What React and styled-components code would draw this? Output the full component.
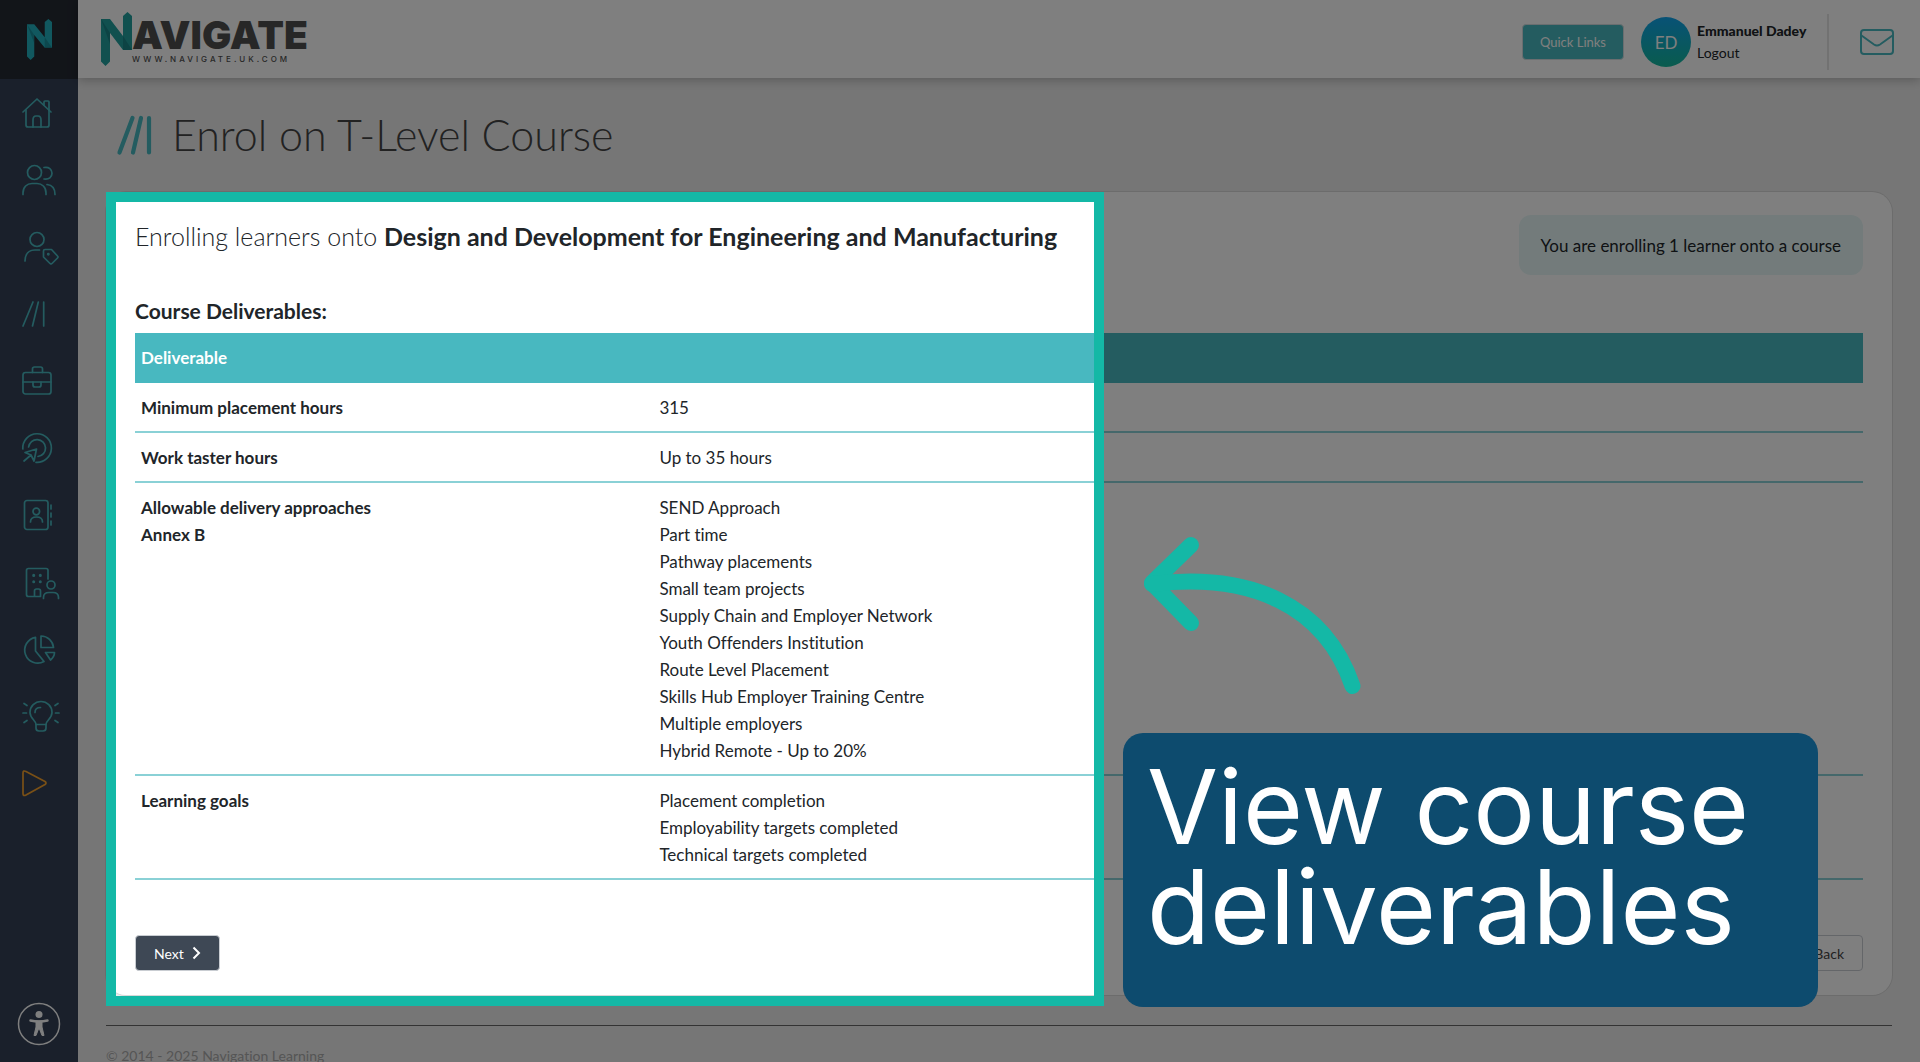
import React from 'react';
import styled, { createGlobalStyle } from 'styled-components';

const teal = '#48b8c0';
const highlight = '#14b8a6';

const GlobalStyle = createGlobalStyle`
  * {
    box-sizing: border-box;
  }

  body {
    margin: 0;
    font-family: Lato, "Open Sans", sans-serif;
    font-size: 17px;
    font-variant-ligatures: none;
    line-height: 27px;
    color: #212529;
  }
`;

const Shell = styled.div`
  display: flex;
  height: 100vh;
  overflow: hidden;
  background: #ededed;
`;

const Sidebar = styled.aside`
  display: flex;
  flex-direction: column;
  flex: 0 0 78px;
  background: #354156;
`;

const SidebarLogo = styled.a`
  display: flex;
  align-items: center;
  justify-content: center;
  height: 79px;
  background: #252a33;
`;

const NavList = styled.ul`
  flex: 1;
  margin: 0;
  padding: 0;
  list-style: none;
`;

const NavLink = styled.a`
  display: flex;
  align-items: center;
  height: 67px;
  padding-left: 20px;
  color: ${(props) => (props.$accent ? '#f5a12c' : teal)};
`;

const NavIcon = styled.svg`
  width: 40px;
  height: 40px;
  fill: none;
  stroke: currentColor;
  stroke-width: 1.7;
  stroke-linecap: round;
  stroke-linejoin: round;
`;

const AccessButton = styled.button`
  align-self: center;
  width: 44px;
  height: 44px;
  margin-bottom: 16px;
  padding: 0;
  border: none;
  background: none;
  color: #fff;
`;

const Content = styled.div`
  display: flex;
  flex: 1;
  flex-direction: column;
  min-width: 0;
`;

const Header = styled.header`
  display: flex;
  flex: none;
  align-items: center;
  justify-content: space-between;
  height: 78px;
  padding: 0 25px 0 23px;
  background: #fff;
  box-shadow: 0 2px 10px rgba(0, 0, 0, 0.25);
`;

const Brand = styled.a`
  display: flex;
  color: #4f4f4f;
  text-decoration: none;
`;

const BrandText = styled.span`
  display: flex;
  flex-direction: column;
  padding-top: 5px;
`;

const BrandName = styled.span`
  font-family: Inter, sans-serif;
  font-size: 39px;
  font-weight: 900;
  line-height: 36px;
`;

const BrandUrl = styled.span`
  font-family: Inter, sans-serif;
  font-size: 8px;
  font-weight: 500;
  line-height: 12px;
  letter-spacing: 3px;
`;

const HeaderTools = styled.div`
  display: flex;
  align-items: center;
  padding-top: 6px;
`;

const QuickLinks = styled.button`
  height: 36px;
  margin-right: 17px;
  padding: 0 17px;
  border: 1px solid #d5dde0;
  border-radius: 4px;
  background: ${teal};
  color: #fff;
  font: 400 13px Lato, sans-serif;
`;

const Avatar = styled.div`
  display: flex;
  align-items: center;
  justify-content: center;
  width: 50px;
  height: 50px;
  border-radius: 50%;
  background: linear-gradient(#10a4ec, #14b89c);
  color: #fff;
  font-size: 17px;
`;

const User = styled.div`
  display: flex;
  flex-direction: column;
  width: 136px;
  padding-left: 6px;
  font-size: 14px;
  line-height: 22px;

  a {
    color: inherit;
    text-decoration: none;
  }
`;

const UserName = styled.strong`
  font-weight: 900;
`;

const MailLink = styled.a`
  display: flex;
  align-items: center;
  height: 56px;
  padding-left: 30px;
  border-left: 2px solid #e4e4e4;
  color: ${teal};
`;

const Main = styled.main`
  flex: 1;
  padding: 0 28px;
`;

const TitleBar = styled.div`
  display: flex;
  align-items: center;
  gap: 20px;
  height: 114px;
  padding-left: 10px;
  color: ${teal};
`;

const Title = styled.h1`
  margin: 0;
  color: #444;
  font-size: 43px;
  font-weight: 300;
  line-height: 56px;
`;

const Card = styled.section`
  position: relative;
  padding: 23px 29px 24px;
  border-radius: 20px;
  background: #fff;
  box-shadow: 0 0 0 1px #d8d8d8;
`;

const CardTop = styled.div`
  display: flex;
  align-items: flex-start;
  justify-content: space-between;
`;

const CourseHeading = styled.h2`
  margin: 0;
  font-size: 25px;
  font-weight: 300;
  line-height: 42px;

  strong {
    font-weight: 700;
  }
`;

const Notice = styled.p`
  margin: 0;
  padding: 17px 22px 16px;
  border-radius: 12px;
  background: #e6f7f7;
`;

const SectionHeading = styled.h3`
  margin: 20px 0 6px;
  font-size: 21px;
  font-weight: 700;
  line-height: 32px;
`;

const Table = styled.table`
  width: 100%;
  border-collapse: separate;
  border-spacing: 0;
  text-align: left;

  th,
  td {
    padding: 11px 6px 10px;
    border-bottom: 2px solid #8ad1d6;
    vertical-align: top;
  }

  thead th {
    border-color: ${teal};
    background: ${teal};
    color: #fff;
  }

  th {
    width: 30%;
    font-weight: 700;
  }
`;

const Line = styled.div`
  white-space: nowrap;
`;

const Actions = styled.div`
  display: flex;
  justify-content: space-between;
  margin-top: 55px;
`;

const ActionButton = styled.button`
  display: flex;
  align-items: center;
  gap: 8px;
  height: 36px;
  padding: 0 18px;
  border: 1px solid #c9cdd2;
  border-radius: 4px;
  background: ${(props) => (props.$primary ? '#3e4855' : '#fff')};
  color: ${(props) => (props.$primary ? '#fff' : '#444')};
  font: 400 14px Lato, sans-serif;
`;

/* Dims the whole page except for the framed part of the card */
const Spotlight = styled.div`
  position: absolute;
  top: 0;
  bottom: -11px;
  left: 0;
  width: 998px;
  border: 10px solid ${highlight};
  box-shadow: 0 0 0 3000px rgba(0, 0, 0, 0.5);
  pointer-events: none;
`;

const CalloutArrow = styled.svg`
  position: absolute;
  top: 341px;
  left: 1034px;
  width: 230px;
  height: 170px;
  fill: none;
  stroke: ${highlight};
  stroke-width: 16;
  stroke-linecap: round;
  stroke-linejoin: round;
`;

const Callout = styled.div`
  position: absolute;
  right: 74px;
  bottom: -12px;
  width: 695px;
  height: 274px;
  padding: 24px;
  border-radius: 20px;
  background: #0d4b6e;
  color: #fff;
  font-family: Inter, sans-serif;
  font-size: 103px;
  line-height: 100px;
`;

const Footer = styled.footer`
  margin-top: 30px;
  padding-top: 16px;
  border-top: 1px solid #666;
  color: #aaa;
  font-size: 14px;
`;

const navItems = [
  {
    label: 'Home',
    icon: (
      <>
        <path d="M3 19 17 6l14 13" />
        <path d="M6 17v15q0 2 2 2h19q2 0 2-2V17" />
        <path d="M24 12V9q0-1 1-1h3q1 0 1 1v8" />
        <path d="M13 34v-7q0-4 3-4h2q3 0 3 4v7" />
      </>
    ),
  },
  {
    label: 'Users',
    icon: (
      <>
        <circle cx="14.5" cy="12.5" r="7" />
        <path d="M24 7.5c5-1 8 2 8 5.8s-3 6.5-8 5.7" />
        <path d="M3 34.500v-1.500c0-6 4-9.500 9-9.500h5c5 0 9 3.500 9 9.500v1.500" />
        <path d="M27 24.500c5 .5 8 4 8 10" />
      </>
    ),
  },
  {
    label: 'Learner tags',
    icon: (
      <>
        <circle cx="17" cy="12.5" r="7" />
        <path d="M5 34c0-7 4-11 10-11h4.500" />
        <path d="M25 22.500h6.500l6 6.500q1 1 0 2l-5.500 5.500q-1 1-2 0l-6.500-6.500V24q0-1.500 1.500-1.500z" />
        <circle cx="28.300" cy="27.300" r=".6" fill="currentColor" />
      </>
    ),
  },
  {
    label: 'Courses',
    icon: <path d="M13 8 3 32M18.300 8l-5.800 24M23.700 8v24" />,
  },
  {
    label: 'Placements',
    icon: (
      <>
        <rect x="3" y="11.5" width="28" height="21.5" rx="2.500" />
        <path d="M12.500 11.500V8q0-2 2-2h6q2 0 2 2v3.500M3 21h28" />
        <path d="M13 21v3q0 2 2 2h4q2 0 2-2v-3" />
      </>
    ),
  },
  {
    label: 'Targets',
    icon: (
      <>
        <path d="M2.800 21A14.300 14.300 0 1 1 16 34.300" />
        <path d="M8.600 19A8.500 8.500 0 1 1 18 28.500" />
        <path d="M16.500 21 5 24.500l6 2.500 3 6zM11 27l-7 6" />
      </>
    ),
  },
  {
    label: 'Contacts',
    icon: (
      <>
        <rect x="4.5" y="5.5" width="23.5" height="29" rx="2.500" />
        <circle cx="16.300" cy="16.500" r="3.300" />
        <path d="M10.500 27c0-3.500 2-5 6-5s6 1.500 6 5M31 10v4M31 18v4M31 26v4" />
      </>
    ),
  },
  {
    label: 'Employers',
    icon: (
      <>
        <path d="M28 17V8.500q0-2-2-2H8.500q-2 0-2 2v24q0 2 2 2h12V29q0-2-2-2h-2q-2 0-2 2v5.500" />
        <path d="M13.700 13.300v.1M20.300 13.300v.1M13.700 19.700v.1M20.300 19.700v.1" strokeWidth="3" />
        <circle cx="31" cy="23" r="4" />
        <path d="M23.500 36.500v-1c0-3.500 2.500-5 5.500-5h4c3 0 5.500 1.500 5.500 5v1" />
      </>
    ),
  },
  {
    label: 'Reports',
    icon: (
      <>
        <path d="M15.500 8.300V22L24 32.500A13 13 0 1 1 15.500 8.300z" />
        <path d="M21 7v11.500h12.500A12.500 12.500 0 0 0 21 7z" />
        <path d="M25.500 23.500h9q0 4-4 7.500z" />
      </>
    ),
  },
  {
    label: 'Ideas',
    icon: (
      <>
        <path d="M16 28.500c0-4-6-6-6-12a11 11 0 0 1 22 0c0 6-6 8-6 12z" />
        <path d="M16 28.500v3.500q0 3 3 3h4q3 0 3-3v-3.500" />
        <path d="M15 16.500c0-3 2-5 5.500-5" />
        <path d="M3 17h3.500M4 7.500l3 2M4 26.500l3-2M35.500 17H39M35 9.500l3-2M35 24.500l3 2" />
      </>
    ),
  },
  {
    label: 'Videos',
    accent: true,
    icon: <path d="M3 10q0-3 3-1.500l19 10q2 1.500 0 3L6 32q-3 1.500-3-1.500z" />,
  },
];

const deliverables = [
  { name: ['Minimum placement hours'], values: ['315'] },
  { name: ['Work taster hours'], values: ['Up to 35 hours'] },
  {
    name: ['Allowable delivery approaches', 'Annex B'],
    values: [
      'SEND Approach',
      'Part time',
      'Pathway placements',
      'Small team projects',
      'Supply Chain and Employer Network',
      'Youth Offenders Institution',
      'Route Level Placement',
      'Skills Hub Employer Training Centre',
      'Multiple employers',
      'Hybrid Remote - Up to 20%',
    ],
  },
  {
    name: ['Learning goals'],
    values: ['Placement completion', 'Employability targets completed', 'Technical targets completed'],
  },
];

const LogoMark = ({ width, height, color, shade }) => (
  <svg width={width} height={height} viewBox="0 0 31 54" preserveAspectRatio="none">
    <path d="M0 7h9l13 17V4l4.500-4L31 4v34h-9L9 21v28.500L4.500 54 0 49.500z" fill={color} />
    <path d="M0 7l9 14v11zM31 38h-9V24z" fill={shade} opacity="0.35" />
  </svg>
);

const App = () => {
  return (
    <>
      <GlobalStyle />
      <Shell>
        <Sidebar>
          <SidebarLogo href="#" aria-label="Navigate">
            <LogoMark width="25" height="41" color="#22b0be" shade="#0b5560" />
          </SidebarLogo>
          <NavList>
            {navItems.map((item) => (
              <li key={item.label}>
                <NavLink href="#" aria-label={item.label} $accent={item.accent}>
                  <NavIcon viewBox="0 0 40 40">{item.icon}</NavIcon>
                </NavLink>
              </li>
            ))}
          </NavList>
          <AccessButton aria-label="Accessibility">
            <svg width="44" height="44" viewBox="0 0 44 44" fill="none" stroke="currentColor">
              <circle cx="22" cy="22" r="20.500" strokeWidth="1.500" />
              <circle cx="22" cy="12.500" r="3.500" fill="currentColor" stroke="none" />
              <path d="M13.500 18.500q8.500 2 17 0" strokeWidth="2.500" strokeLinecap="round" />
              <path d="M19 19h6v6l2 8.500h-2L22.500 27h-1L19 33.500h-2L19 25z" fill="currentColor" strokeLinejoin="round" />
            </svg>
          </AccessButton>
        </Sidebar>

        <Content>
          <Header>
            <Brand href="#">
              <LogoMark width="31" height="54" color="#22a09f" shade="#0b5560" />
              <BrandText>
                <BrandName>AVIGATE</BrandName>
                <BrandUrl>WWW.NAVIGATE.UK.COM</BrandUrl>
              </BrandText>
            </Brand>
            <HeaderTools>
              <QuickLinks>Quick Links</QuickLinks>
              <Avatar>ED</Avatar>
              <User>
                <UserName>Emmanuel Dadey</UserName>
                <a href="#">Logout</a>
              </User>
              <MailLink href="#" aria-label="Messages">
                <svg width="36" height="28" viewBox="0 0 36 28" fill="none" stroke="currentColor" strokeWidth="2">
                  <rect x="2" y="2" width="32" height="24" rx="3" />
                  <path d="M2.500 7.500 15 16.500q3 2 6 0L33.500 7.500" />
                </svg>
              </MailLink>
            </HeaderTools>
          </Header>

          <Main>
            <TitleBar>
              <svg width="36" height="42" viewBox="0 0 36 42" stroke="currentColor" strokeWidth="4.200" strokeLinecap="round">
                <path d="M16.500 4 3.500 38.500M25 4l-8 34.500M33 4v34.500" />
              </svg>
              <Title>Enrol on T-Level Course</Title>
            </TitleBar>

            <Card>
              <CardTop>
                <CourseHeading>
                  Enrolling learners onto <strong>Design and Development for Engineering and Manufacturing</strong>
                </CourseHeading>
                <Notice>You are enrolling 1 learner onto a course</Notice>
              </CardTop>

              <SectionHeading>Course Deliverables:</SectionHeading>
              <Table>
                <thead>
                  <tr>
                    <th colSpan="2">Deliverable</th>
                  </tr>
                </thead>
                <tbody>
                  {deliverables.map((row) => (
                    <tr key={row.name[0]}>
                      <th scope="row">
                        {row.name.map((line) => (
                          <Line key={line}>{line}</Line>
                        ))}
                      </th>
                      <td>
                        {row.values.map((line) => (
                          <Line key={line}>{line}</Line>
                        ))}
                      </td>
                    </tr>
                  ))}
                </tbody>
              </Table>

              <Actions>
                <ActionButton $primary>
                  Next
                  <svg width="9" height="14" viewBox="0 0 9 14" fill="none" stroke="currentColor" strokeWidth="2">
                    <path d="m1.500 1.500 5.500 5.500-5.500 5.500" />
                  </svg>
                </ActionButton>
                <ActionButton>Back</ActionButton>
              </Actions>

              <Spotlight />
              <CalloutArrow viewBox="0 0 230 170">
                <path d="M51 12 12 50l39 40" />
                <path d="M12 51c98-12 173 21 200.500 102" />
              </CalloutArrow>
              <Callout>
                View course
                <br />
                deliverables
              </Callout>
            </Card>

            <Footer>© 2014 - 2025 Navigation Learning</Footer>
          </Main>
        </Content>
      </Shell>
    </>
  );
};

export default App;
